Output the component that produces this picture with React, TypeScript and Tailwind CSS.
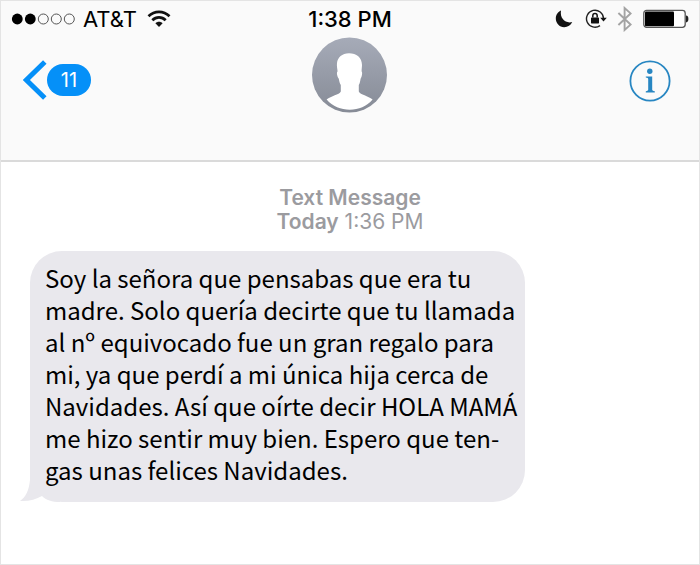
const messageLines = [
  'Soy la señora que pensabas que era tu',
  'madre. Solo quería decirte que tu llamada',
  'al nº equivocado fue un gran regalo para',
  'mi, ya que perdí a mi única hija cerca de',
  'Navidades. Así que oírte decir HOLA MAMÁ',
  'me hizo sentir muy bien. Espero que ten-',
  'gas unas felices Navidades.',
]

function SignalDots() {
  return (
    <svg width="64" height="12" viewBox="0 0 64 12" aria-hidden="true">
      <circle cx="6.3" cy="6" r="5.4" fill="#000" />
      <circle cx="19.3" cy="6" r="5.4" fill="#000" />
      <circle cx="32.3" cy="6" r="5" fill="none" stroke="#555" />
      <circle cx="45.3" cy="6" r="5" fill="none" stroke="#555" />
      <circle cx="58.3" cy="6" r="5" fill="none" stroke="#555" />
    </svg>
  )
}

function WifiIcon() {
  return (
    <svg width="24" height="18" viewBox="0 0 24 18" aria-hidden="true">
      <g fill="none" stroke="#111" strokeWidth="2.7">
        <path d="M1.5 6.3C7.5 0.3 16.5 0.3 22.5 6.3" />
        <path d="M5.3 10.3C9.2 6.4 14.8 6.4 18.7 10.3" />
      </g>
      <path d="M8.4 13.2C10.4 11.2 13.6 11.2 15.6 13.2L12 17Z" fill="#111" />
    </svg>
  )
}

function MoonIcon() {
  return (
    <svg width="18" height="18" viewBox="0 0 18 18" aria-hidden="true">
      <path
        d="M6 0.6C3.2 1.7 0.8 4.6 0.8 8.6C0.8 13.4 4.4 17.2 9.2 17.2C12.8 17.2 15.8 15.3 17.2 12C11 13.8 4.6 9 6 0.6Z"
        fill="#111"
      />
    </svg>
  )
}

function RotationLockIcon() {
  return (
    <svg width="22" height="20" viewBox="0 0 22 20" aria-hidden="true">
      <path d="M15 16.6A8.5 8.5 0 1 1 18.5 9.5" fill="none" stroke="#222" strokeWidth="1.4" />
      <path d="M15.2 8.8H21.8L18.5 12.4Z" fill="#111" />
      <rect x="6" y="8.4" width="8" height="6" rx="0.6" fill="#111" />
      <path d="M7.8 8.6V6.8A2.2 2.2 0 0 1 12.2 6.8V8.6" fill="none" stroke="#111" strokeWidth="1.5" />
    </svg>
  )
}

function BluetoothIcon() {
  return (
    <svg width="16" height="26" viewBox="0 0 16 26" aria-hidden="true">
      <path
        d="M1.4 7L13.6 18.6L7.6 24V2L13.6 7.4L1.4 19"
        fill="none"
        stroke="#a3a3a3"
        strokeWidth="1.9"
      />
    </svg>
  )
}

function BatteryIcon() {
  return (
    <svg width="46" height="20" viewBox="0 0 46 20" aria-hidden="true">
      <rect x="0.8" y="1.4" width="41.4" height="17" rx="2.8" fill="#fff" stroke="#555" strokeWidth="1.3" />
      <rect x="2" y="2.6" width="29" height="14.6" rx="1" fill="#000" />
      <path d="M43 6.6C44.8 6.8 45.4 8 45.4 10C45.4 12 44.8 13.2 43 13.4Z" fill="#222" />
    </svg>
  )
}

function Avatar() {
  return (
    <svg width="76" height="76" viewBox="0 0 76 76" role="img" aria-label="Contact">
      <defs>
        <linearGradient id="avatar-fill" x1="0" y1="0" x2="0" y2="1">
          <stop offset="0" stopColor="#a6abb8" />
          <stop offset="1" stopColor="#868b96" />
        </linearGradient>
      </defs>
      <circle cx="37.5" cy="38" r="37.5" fill="url(#avatar-fill)" />
      <path
        d="M37 16.2C44.5 16.2 50 20.5 50 28C50 30 49.6 32 49.6 34.5C50.6 35 50.2 39.5 48.6 41.8C48.2 44.4 47.8 46.4 46.8 48V54.5C48.4 58 56 58.6 60.6 62.6C54.6 69.6 46.6 72.8 37.8 72.8C29 72.8 20.6 69.6 14.6 62.6C19.2 58.6 27.2 58 28.8 54.5V48C27.8 46.4 27.2 44.4 26.8 41.8C25 39.5 24.4 35 25.6 34.5C25.4 32 24.6 29 25 26C25.6 20.5 30 16.2 37 16.2Z"
        fill="#fff"
      />
    </svg>
  )
}

function InfoIcon() {
  return (
    <svg width="42" height="42" viewBox="0 0 42 42" aria-hidden="true">
      <circle cx="21" cy="21" r="19.6" fill="none" stroke="#2786c2" strokeWidth="1.8" />
      <circle cx="20.8" cy="11.2" r="2.7" fill="#2786c2" />
      <path
        d="M16.8 16.4H23.2V29.6C23.2 30.6 23.8 31 25.8 31.2V32.4H16.8V31.2C18.6 31 19.2 30.6 19.2 29.6V19.2C19.2 18.1 18.6 17.7 16.8 17.5Z"
        fill="#2786c2"
      />
    </svg>
  )
}

function StatusBar() {
  return (
    <div className="grid grid-cols-[1fr_auto_1fr] items-center h-9 px-[10px] text-black">
      <div className="flex items-center">
        <SignalDots />
        <span className="ml-2 text-[22px]">AT&amp;T</span>
        <span className="ml-[10px]">
          <WifiIcon />
        </span>
      </div>
      <span className="text-[22px] font-medium">1:38 PM</span>
      <div className="flex items-center justify-end">
        <MoonIcon />
        <span className="ml-3">
          <RotationLockIcon />
        </span>
        <span className="ml-[10px]">
          <BluetoothIcon />
        </span>
        <span className="ml-[10px]">
          <BatteryIcon />
        </span>
      </div>
    </div>
  )
}

function NavBar() {
  return (
    <div className="grid grid-cols-[1fr_auto_1fr] items-start pl-[22px] pr-7">
      <button type="button" className="flex items-center justify-self-start mt-[23px]" aria-label="Back, 11 unread">
        <svg width="24" height="40" viewBox="0 0 24 40" aria-hidden="true">
          <path d="M21.8 2L3.4 20L21.8 38" fill="none" stroke="#0590f8" strokeWidth="5" />
        </svg>
        <span className="flex items-center justify-center w-11 h-8 rounded-full bg-[#0590f8] text-white text-[20px]">
          11
        </span>
      </button>
      <span className="ml-[6px]">
        <Avatar />
      </span>
      <button type="button" className="justify-self-end mt-[23px]" aria-label="Details">
        <InfoIcon />
      </button>
    </div>
  )
}

export default function App() {
  return (
    <div className="min-h-screen flex flex-col bg-white border border-[#e4e4e4] font-['Inter','Liberation_Sans',sans-serif]">
      <header className="h-[161px] bg-[#fafafa] border-b-2 border-[#dadada]">
        <StatusBar />
        <NavBar />
      </header>

      <main className="flex-1 pt-6">
        <p className="text-center text-[21px] leading-6 text-[#9b9b9f]">
          <span className="font-semibold">Text Message</span>
          <br />
          <span className="font-semibold">Today</span> 1:36 PM
        </p>

        {/* Incoming bubble, the tail hangs out of its lower left corner */}
        <div className="relative w-fit mt-[17px] ml-[29px] pl-[15px] pr-2 pt-[11px] pb-4 rounded-[32px] bg-[#e9e8ed]">
          <svg
            className="absolute -left-[10px] bottom-0"
            width="40"
            height="32"
            viewBox="0 0 40 32"
            aria-hidden="true"
          >
            <path d="M10 0V10C9 20 6 27 0 31C8 31.6 16 29.5 22 26C26 30 32 32 40 32V0Z" fill="#e9e8ed" />
          </svg>
          <p className="relative text-[24px] leading-8 text-black font-['Noto_Sans_CJK_SC',sans-serif]">
            {messageLines.map((line) => (
              <span key={line} className="block whitespace-nowrap">
                {line}
              </span>
            ))}
          </p>
        </div>
      </main>
    </div>
  )
}
